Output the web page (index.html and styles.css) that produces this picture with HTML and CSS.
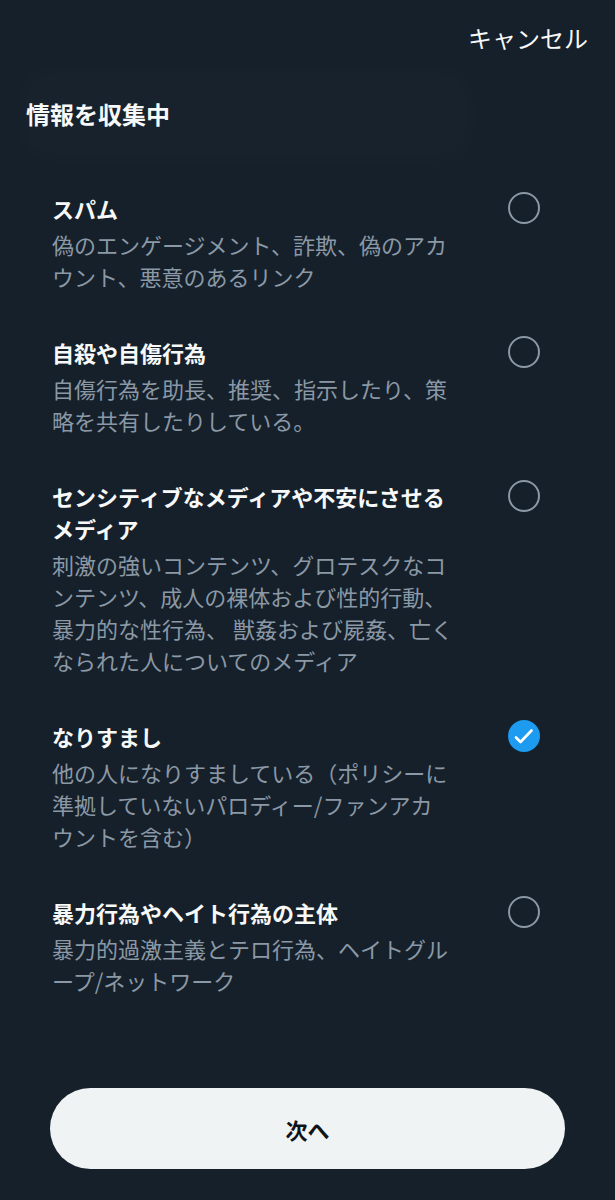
FILE: index.html
```html
<!DOCTYPE html>
<html lang="ja"><head>
<meta charset="utf-8">
<meta name="viewport" content="width=device-width, initial-scale=1">
<title>情報を収集中</title>
<link rel="stylesheet" href="styles.css"></head>

<body>
<div class="topBar">
	<span class="cancel">キャンセル</span>
</div>

<div class="headBox">
	<h1>情報を収集中</h1>
</div>

<div class="list">
	<div class="item">
		<div class="txt">
			<div class="ttl">スパム</div>
			<div class="desc">偽のエンゲージメント、詐欺、偽のアカ<br>ウント、悪意のあるリンク</div>
		</div>
		<span class="radio"></span>
	</div>

	<div class="item">
		<div class="txt">
			<div class="ttl">自殺や自傷行為</div>
			<div class="desc">自傷行為を助長、推奨、指示したり、策<br>略を共有したりしている。</div>
		</div>
		<span class="radio"></span>
	</div>

	<div class="item">
		<div class="txt">
			<div class="ttl">センシティブなメディアや不安にさせる<br>メディア</div>
			<div class="desc">刺激の強いコンテンツ、グロテスクなコ<br>ンテンツ、成人の裸体および性的行動、<br>暴力的な性行為、 獣姦および屍姦、亡く<br>なられた人についてのメディア</div>
		</div>
		<span class="radio"></span>
	</div>

	<div class="item">
		<div class="txt">
			<div class="ttl">なりすまし</div>
			<div class="desc">他の人になりすましている（ポリシーに<br>準拠していないパロディー/ファンアカ<br>ウントを含む）</div>
		</div>
		<span class="radio checked">
			<svg viewBox="0 0 32 32" width="32" height="32"><path d="M8 17.5 L12.5 22 L23.5 10.5" fill="none" stroke="#ffffff" stroke-width="2.6" stroke-linecap="round" stroke-linejoin="round"/></svg>
		</span>
	</div>

	<div class="item">
		<div class="txt">
			<div class="ttl">暴力行為やヘイト行為の主体</div>
			<div class="desc">暴力的過激主義とテロ行為、ヘイトグル<br>ープ/ネットワーク</div>
		</div>
		<span class="radio"></span>
	</div>
</div>

<button class="nextBtn">次へ</button>
</body>
</html>
```

FILE: styles.css
```css
/* page: dim dark theme */
body {
	margin: 0;
	background-color: #15202b;
	color: #f7f9f9;
	font-family: "Noto Sans CJK JP", "Noto Sans", sans-serif;
}

/* top bar with the cancel link */
.topBar {
	height: 76px;
	display: flex;
	justify-content: flex-end;
	align-items: center;
	padding-right: 27px;
}
.cancel {
	font-size: 24px;
	line-height: 1;
}

/* heading on a faint, very blurry panel */
.headBox {
	height: 80px;
	width: 440px;
	margin-left: 26px;
	margin-top: -2px;
	display: flex;
	align-items: center;
	background-color: rgba(255, 255, 255, 0.012);
	box-shadow: 0 0 22px 8px rgba(255, 255, 255, 0.014);
	border-radius: 24px;
}
.headBox h1 {
	margin: 0;
	font-size: 24px;
	line-height: 32px;
	font-weight: 700;
}

/* the report options */
.list {
	padding-top: 16px;
}
.item {
	display: flex;
	align-items: flex-start;
	padding: 22px 75px 22px 52px;
}
.txt {
	flex: 1;
}
.ttl {
	font-size: 22px;
	line-height: 32px;
	font-weight: 700;
}
.desc {
	margin-top: 4px;
	font-size: 22px;
	line-height: 32px;
	color: #8b98a5;
}

.radio {
	box-sizing: border-box;
	width: 32px;
	height: 32px;
	border: 2.5px solid #8b98a5;
	border-radius: 50%;
	flex-shrink: 0;
}
.radio.checked {
	border: none;
	background-color: #1d9bf0;
}
.radio svg {
	display: block;
}

/* bottom button */
.nextBtn {
	display: block;
	width: 515px;
	height: 81px;
	margin: 70px 0 0 50px;
	border: none;
	border-radius: 41px;
	background-color: #eff3f4;
	color: #0f1419;
	font-family: "Noto Sans CJK JP", "Noto Sans", sans-serif;
	font-size: 22px;
	font-weight: 700;
}
```
